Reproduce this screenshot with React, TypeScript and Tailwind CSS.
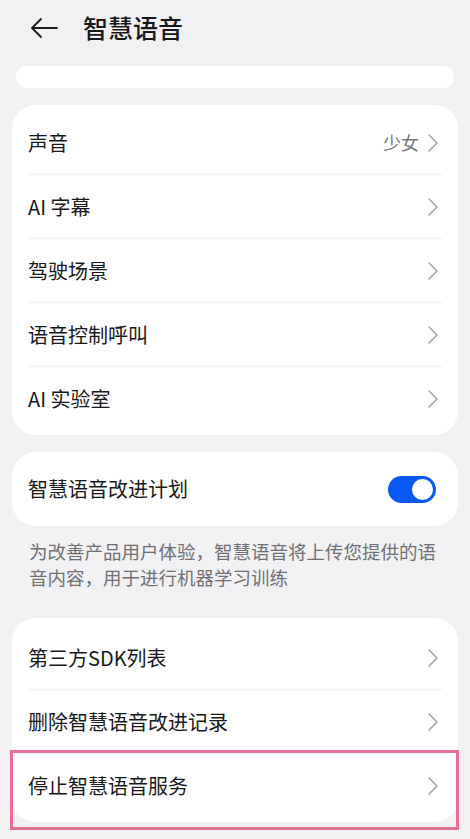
const font = { fontFamily: '"Noto Sans CJK SC", "Noto Sans", sans-serif' };

function Chevron() {
  return (
    <svg width="12" height="20" viewBox="0 0 12 20" fill="none" className="shrink-0">
      <path d="M2 2l8 8-8 8" stroke="#a3a3a6" strokeWidth="1.6" strokeLinecap="round" strokeLinejoin="round" />
    </svg>
  );
}

function Row({ label, value, last }: { label: string; value?: string; last?: boolean }) {
  return (
    <div className="px-4">
      <div className={`flex h-16 items-center justify-between ${last ? "" : "border-b border-[#ececee]"}`}>
        <span className="text-[20px] text-[#18181a]">{label}</span>
        <div className="flex items-center gap-2 pr-[3px]">
          {value && <span className="text-[18px] text-[#77777a]">{value}</span>}
          <Chevron />
        </div>
      </div>
    </div>
  );
}

export default function App() {
  return (
    <div className="min-h-[839px] w-[470px] bg-[#f1f1f3] pb-4" style={font}>
      <div className="flex h-[56px] items-center pl-[30px]">
        <svg width="28" height="22" viewBox="0 0 28 22" fill="none">
          <path d="M11 2L2 11l9 9M2.5 11H27" stroke="#1b1b1d" strokeWidth="1.8" strokeLinecap="round" strokeLinejoin="round" />
        </svg>
        <h1 className="ml-[25px] text-[25px] font-medium text-[#18181a]">智慧语音</h1>
      </div>

      <div className="mx-4 mt-[10px] h-[22px] rounded-full bg-white" />

      <div className="mx-3 mt-[17px] rounded-[24px] bg-white pb-1 pt-[6px]">
        <Row label="声音" value="少女" />
        <Row label="AI 字幕" />
        <Row label="驾驶场景" />
        <Row label="语音控制呼叫" />
        <Row label="AI 实验室" last />
      </div>

      <div className="mx-3 mt-[17px] flex h-[74px] items-center justify-between rounded-[24px] bg-white px-4">
        <span className="text-[20px] text-[#18181a]">智慧语音改进计划</span>
        <div className="relative mr-[6px] h-[27px] w-[48px] rounded-full bg-[#0a59f7]">
          <div className="absolute right-[3px] top-[3px] h-[21px] w-[21px] rounded-full bg-white" />
        </div>
      </div>

      <p className="mt-3 px-[29px] text-[18.5px] leading-[26px] text-[#707073]">
        为改善产品用户体验，智慧语音将上传您提供的语音内容，用于进行机器学习训练
      </p>

      <div className="relative mx-3 mt-[28px] rounded-[24px] bg-white pb-1 pt-2">
        <Row label="第三方SDK列表" />
        <Row label="删除智慧语音改进记录" last />
        <Row label="停止智慧语音服务" last />
        <div className="absolute left-[-2px] right-[-1px] top-[132px] h-[80px] border-[3px] border-[#e3718f]" />
      </div>
    </div>
  );
}
